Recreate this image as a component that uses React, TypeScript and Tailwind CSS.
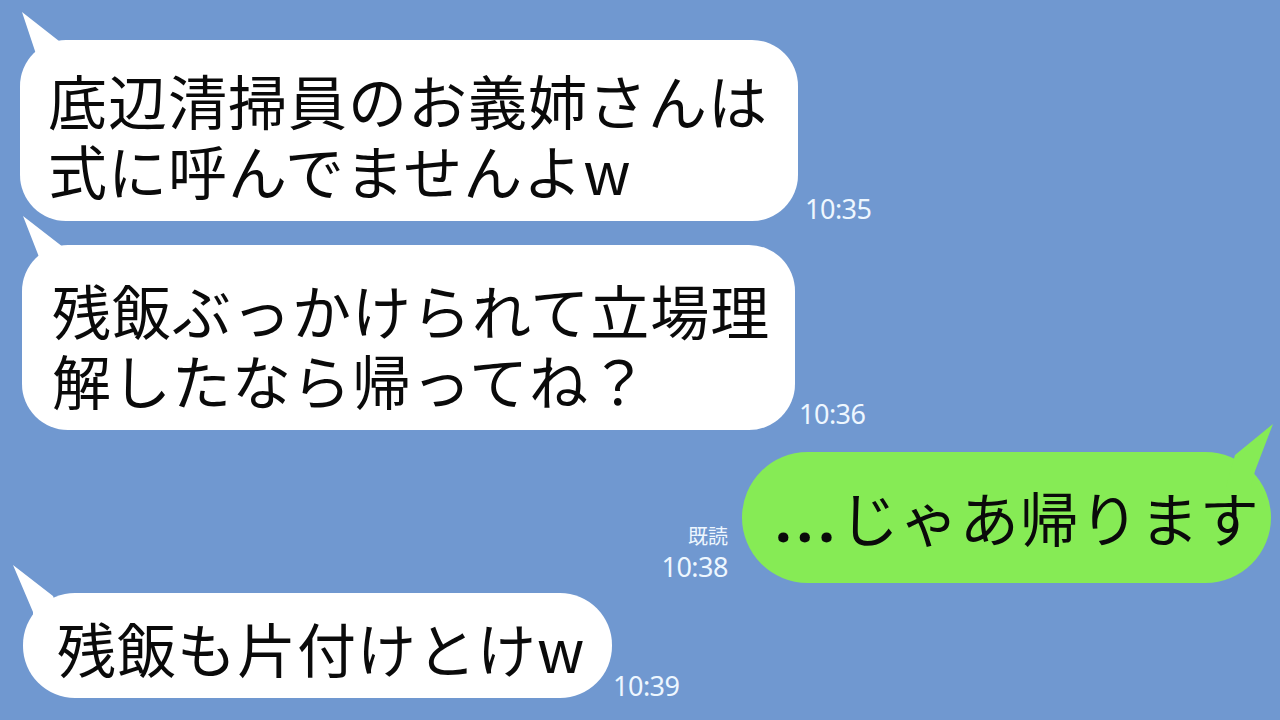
import React from "react";

const jp = { fontFamily: '"Noto Sans CJK JP", "Noto Sans", sans-serif' };
const ts = { fontFamily: '"Noto Sans", "DejaVu Sans", sans-serif' };
const latin = { fontFamily: '"Noto Sans", "DejaVu Sans", sans-serif' };

/* Tail drawn in a box whose origin sits on the bubble's top-left corner */
function TailLeft({ pts }: { pts: string }) {
  return (
    <svg className="absolute -left-[40px] -top-[40px]" width="100" height="100" viewBox="-40 -40 100 100">
      <polygon points={pts} fill="#ffffff" />
    </svg>
  );
}

export default function App() {
  return (
    <div className="w-[1280px] h-[720px] bg-[#7098d0] overflow-hidden flex flex-col pt-[40px]" style={jp}>
      {/* message 1 */}
      <div className="flex items-end pl-[20px]">
        <div className="relative w-[778px] h-[181px] bg-white rounded-[46px] flex flex-col justify-center pl-[28px] pt-[8px] text-[59px] leading-[70px] tracking-[1px] text-[#0a0a0a] whitespace-nowrap">
          <TailLeft pts="2,-28 39,1 45,30 15,30 16,14" />
          <span className="relative">底辺清掃員のお義姉さんは</span>
          <span className="relative">式に呼んでませんよw</span>
        </div>
        <div className="ml-[7px] mb-[-4px] text-[27px] leading-[32px] tracking-[-0.5px] text-[#eef7ff]" style={ts}>10:35</div>
      </div>

      {/* message 2 */}
      <div className="flex items-end pl-[22px] mt-[24px]">
        <div className="relative w-[773px] h-[185px] bg-white rounded-[46px] flex flex-col justify-center pl-[30px] pt-[14px] text-[59px] leading-[70px] tracking-[1px] text-[#0a0a0a] whitespace-nowrap">
          <TailLeft pts="1,-29 41,2 45,30 15,30 19,17" />
          <span className="relative">残飯ぶっかけられて立場理</span>
          <span className="relative">解したなら帰ってね？</span>
        </div>
        <div className="ml-[4px] mb-[0px] text-[27px] leading-[32px] tracking-[-0.5px] text-[#eef7ff]" style={ts}>10:36</div>
      </div>

      {/* message 3 (mine) */}
      <div className="flex items-end justify-end pr-[9px] mt-[22px]">
        <div className="flex flex-col items-end mr-[14px] mb-[2px] text-[#eef7ff]" style={ts}>
          <span className="text-[20px] leading-[22px]" style={jp}>既読</span>
          <span className="text-[27px] leading-[28px] tracking-[-0.5px] mt-[6px]">10:38</span>
        </div>
        <div className="relative w-[529px] h-[131px] bg-[#86eb55] rounded-[66px] flex items-center pl-[33px] text-[59px] leading-[70px] tracking-[1px] text-[#0a0a0a] whitespace-nowrap">
          <svg className="absolute -right-[40px] -top-[40px]" width="100" height="100" viewBox="-60 -40 100 100">
            <polygon points="2,-28 -16,19 -20,35 -45,35 -36,3" fill="#86eb55" />
          </svg>
          <span className="relative">
            <span className="font-bold tracking-[5px]" style={latin}>...</span>じゃあ帰ります
          </span>
        </div>
      </div>

      {/* message 4 */}
      <div className="flex items-end pl-[23px] mt-[10px]">
        <div className="relative w-[589px] h-[105px] bg-white rounded-[52px] flex items-center pl-[34px] pt-[4px] text-[59px] leading-[70px] tracking-[1px] text-[#0a0a0a] whitespace-nowrap">
          <TailLeft pts="-10,-28 30,3 40,30 10,30 10,19" />
          <span className="relative">残飯も片付けとけw</span>
        </div>
        <div className="ml-[1px] mb-[-4px] text-[27px] leading-[32px] tracking-[-0.5px] text-[#eef7ff]" style={ts}>10:39</div>
      </div>
    </div>
  );
}
